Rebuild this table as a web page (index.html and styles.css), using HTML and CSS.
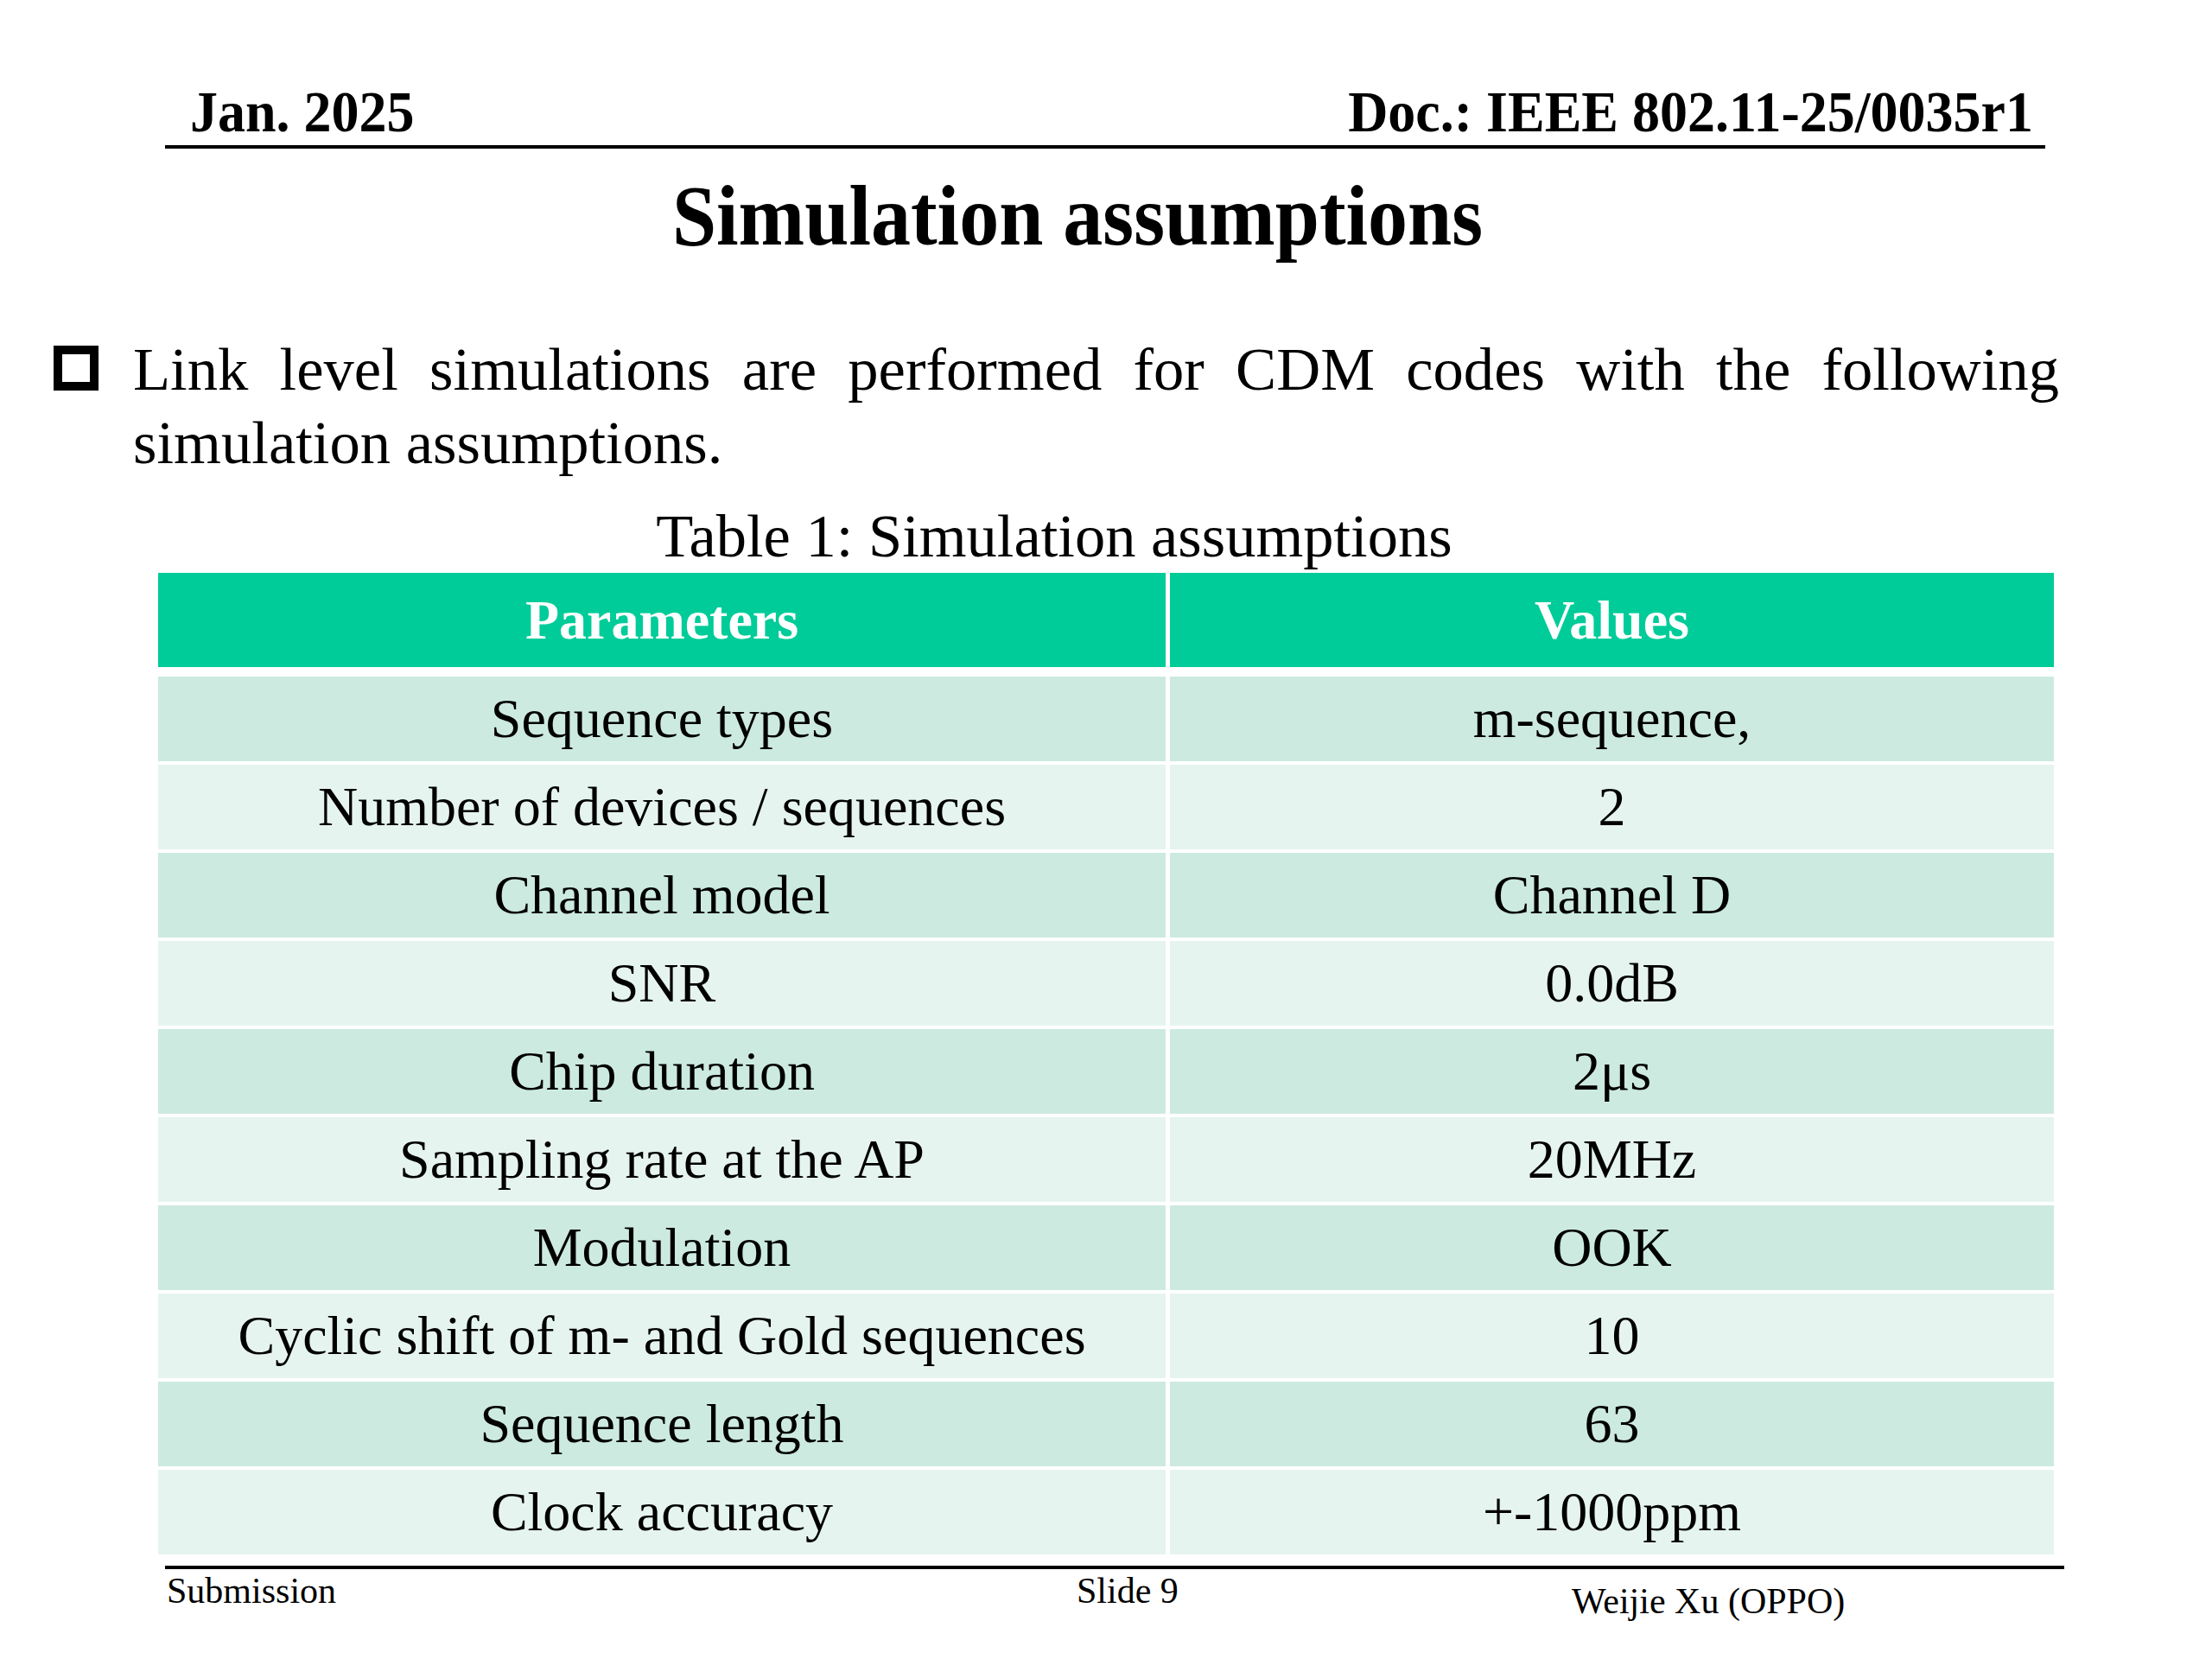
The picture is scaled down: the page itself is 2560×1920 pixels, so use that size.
FILE: index.html
```html
<!DOCTYPE html>
<html lang="en">
<head>
<meta charset="utf-8">
<title>Simulation assumptions</title>
<link rel="stylesheet" href="styles.css">
</head>
<body>
<div class="slide">
  <header class="top">
    <span class="top-date">Jan. 2025</span>
    <span class="top-doc">Doc.: IEEE 802.11-25/0035r1</span>
  </header>

  <h1 class="title">Simulation assumptions</h1>

  <div class="bullet">
    <span class="bullet-mark"></span>
    <p class="bullet-text">Link level simulations are performed for CDM codes with the following simulation assumptions.</p>
  </div>

  <div class="caption">Table 1: Simulation assumptions</div>

  <div class="table">
    <div class="row row-head">
      <div class="cell">Parameters</div>
      <div class="cell">Values</div>
    </div>
    <div class="body">
      <div class="row row-odd"><div class="cell">Sequence types</div><div class="cell">m-sequence,</div></div>
      <div class="row row-even"><div class="cell">Number of devices / sequences</div><div class="cell">2</div></div>
      <div class="row row-odd"><div class="cell">Channel model</div><div class="cell">Channel D</div></div>
      <div class="row row-even"><div class="cell">SNR</div><div class="cell">0.0dB</div></div>
      <div class="row row-odd"><div class="cell">Chip duration</div><div class="cell">2μs</div></div>
      <div class="row row-even"><div class="cell">Sampling rate at the AP</div><div class="cell">20MHz</div></div>
      <div class="row row-odd"><div class="cell">Modulation</div><div class="cell">OOK</div></div>
      <div class="row row-even"><div class="cell">Cyclic shift of m- and Gold sequences</div><div class="cell">10</div></div>
      <div class="row row-odd"><div class="cell">Sequence length</div><div class="cell">63</div></div>
      <div class="row row-even"><div class="cell">Clock accuracy</div><div class="cell">+-1000ppm</div></div>
    </div>
  </div>

  <footer class="foot">
    <span class="foot-sub">Submission</span>
    <span class="foot-slide">Slide 9</span>
    <span class="foot-author">Weijie Xu (OPPO)</span>
  </footer>
</div>
</body>
</html>
```

FILE: styles.css
```css
html, body {
  margin: 0;
  padding: 0;
  background: #ffffff;
}

.slide {
  width: 2560px;
  height: 1920px;
  overflow: hidden;
  background: #ffffff;
  color: #000000;
  font-family: "Liberation Serif", "Times New Roman", serif;
  display: flex;
  flex-direction: column;
}

/* Header */
.top {
  margin-left: 191px;
  width: 2176px;
  box-sizing: border-box;
  padding: 99px 14px 5px 29px;
  border-bottom: 4px solid #000000;
  display: flex;
  justify-content: space-between;
  font-weight: bold;
  font-size: 64px;
  line-height: 64px;
}

.top-date,
.top-doc {
  display: inline-block;
  transform: scaleY(1.06);
  transform-origin: 50% 54px;
}

/* Title */
.title {
  margin: 34px 0 0 0;
  padding-right: 66px;
  text-align: center;
  font-size: 92px;
  line-height: 92px;
  font-weight: bold;
  transform: scaleY(1.07);
  transform-origin: 50% 77px;
}

/* Bullet */
.bullet {
  margin: 87px 0 0 62px;
  display: flex;
  align-items: flex-start;
  gap: 40px;
}

.bullet-mark {
  flex: none;
  width: 32px;
  height: 32px;
  border: 10.5px solid #000000;
  margin-top: 15px;
}

.bullet-text {
  margin: 0;
  width: 2229px;
  font-size: 70.6px;
  line-height: 85px;
  text-align: justify;
}

/* Caption */
.caption {
  margin-top: 23px;
  width: 2440px;
  text-align: center;
  font-size: 70.5px;
  line-height: 85px;
}

/* Table */
.table {
  margin-left: 183px;
  width: 2194px;
  display: flex;
  flex-direction: column;
}

.row {
  display: grid;
  grid-template-columns: 1166px 1023px;
  column-gap: 5px;
}

.cell {
  display: flex;
  align-items: center;
  justify-content: center;
  font-size: 64px;
  line-height: 64px;
}

.row-head {
  height: 109px;
  margin-bottom: 11px;
}

.row-head .cell {
  background: #00cc99;
  color: #ffffff;
  font-weight: bold;
}

.body {
  display: flex;
  flex-direction: column;
  gap: 4px;
}

.body .row {
  height: 98px;
}

.row-odd .cell {
  background: #cceae0;
}

.row-even .cell {
  background: #e6f4ef;
}

/* Footer */
.foot {
  margin: 13px 0 0 191px;
  width: 2198px;
  box-sizing: border-box;
  border-top: 4px solid #000000;
  padding: 4px 0 0 2px;
  display: grid;
  grid-template-columns: 1053px 573px 1fr;
  align-items: start;
  font-size: 42px;
  line-height: 42px;
}

.foot-author {
  margin-top: 12px;
}
```
